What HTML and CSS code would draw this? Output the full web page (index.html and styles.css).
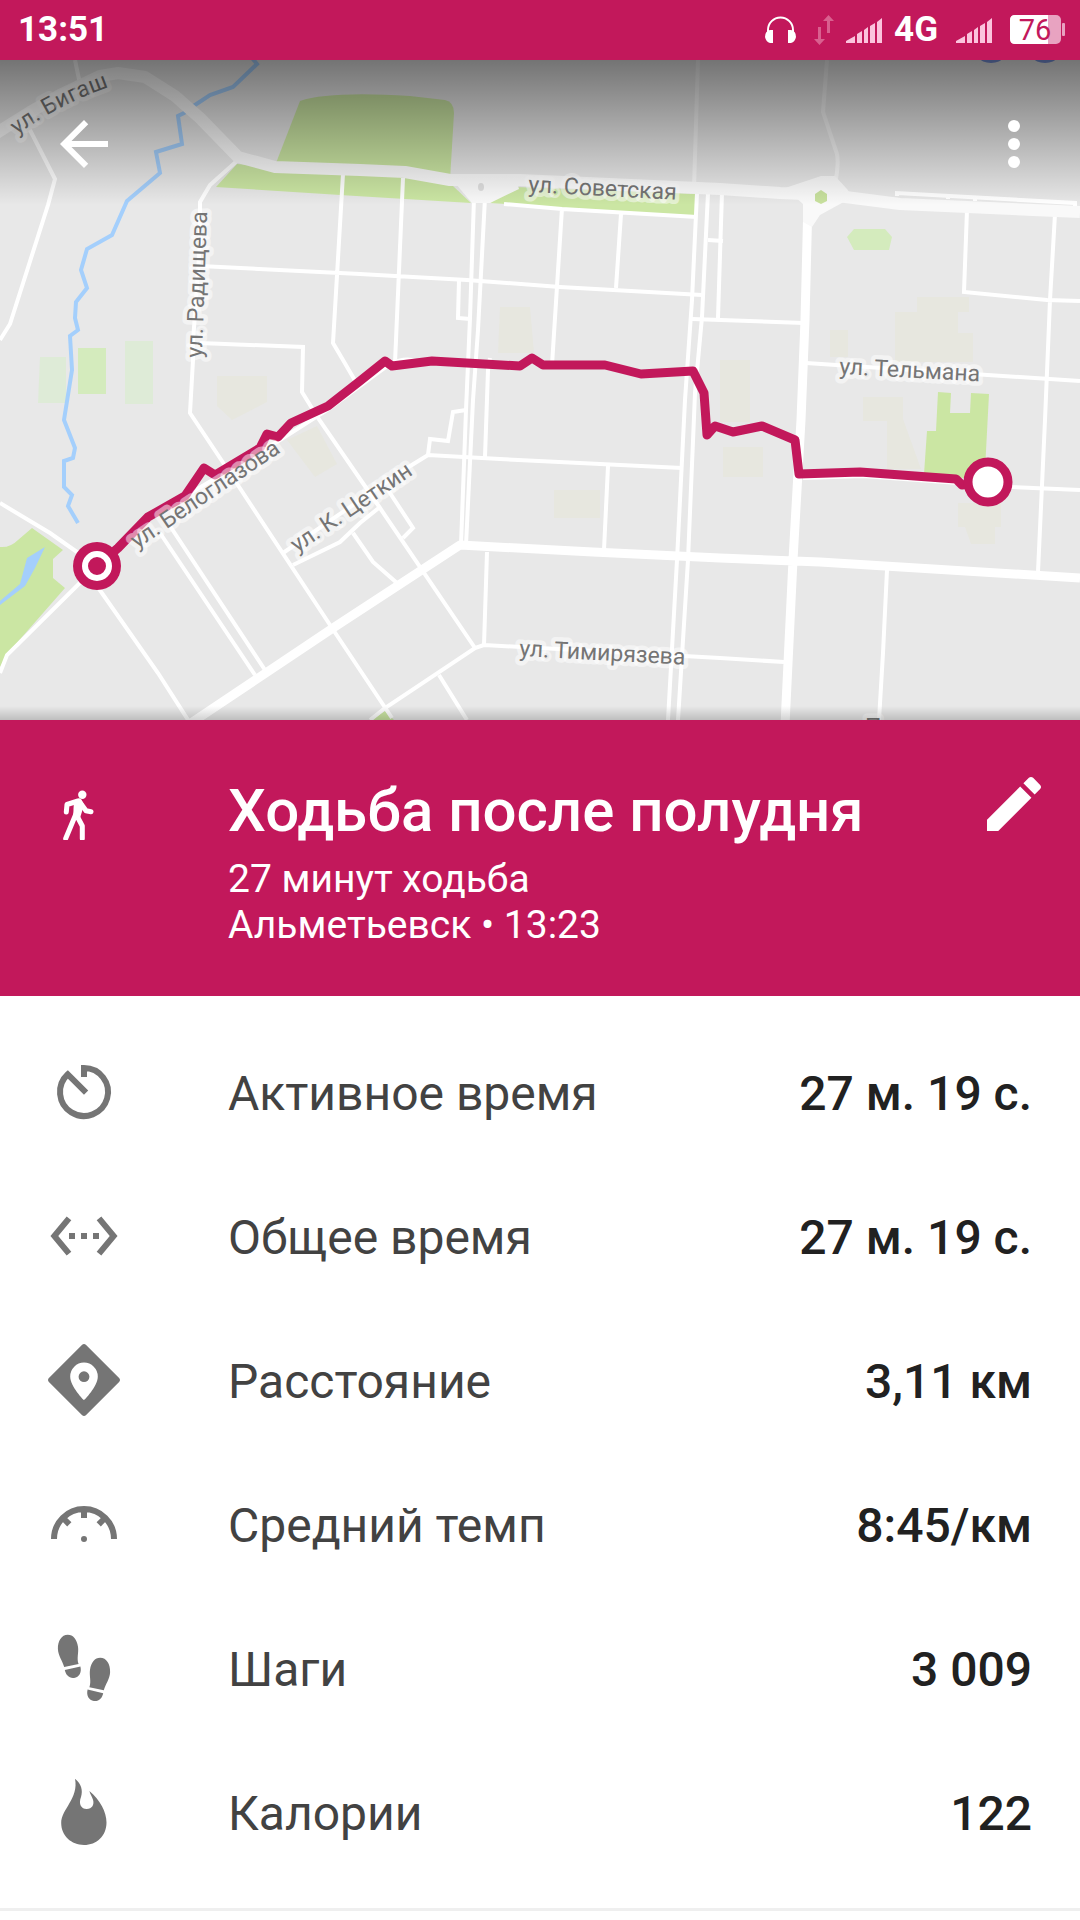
FILE: index.html
```
<!DOCTYPE html>
<html lang="ru">
<head>
    <meta charset="UTF-8">
    <meta name="viewport" content="width=device-width, initial-scale=1.0">
    <title>Ходьба после полудня</title>
    <link rel="stylesheet" href="styles.css">
</head>
<body>
    <div class="status-bar">
        <span class="clock">13:51</span>
        <div class="status-icons">
            <svg class="headphones" viewBox="0 0 31 28" width="31" height="28">
                <path d="M3 18v-4a12.500 12.500 0 0 1 25 0v4" fill="none" stroke="#fff" stroke-width="2"/>
                <path d="M8 14v13H5q-4-1-5-6 0-6 5-7zM23 14v13h3q4-1 5-6 0-6-5-7z" fill="#fff"/>
            </svg>
            <svg class="transfer" viewBox="0 0 20 30" width="20" height="30">
                <path d="M4 12h3v12h4l-5.500 6L0 24h4zM13 18h3V6h4l-5.500-6L9 6h4z" fill="#d9608f"/>
            </svg>
            <svg class="signal" viewBox="0 0 36 25" width="36" height="25">
                <path d="M0 25v-2l9-5v7zM11 25v-9l5-3v12zM18 25V12l4-3v16zM24 25V8l5-3v20zM31 25V4l5-4v25z" fill="#fbc4dd"/>
            </svg>
            <span class="network">4G</span>
            <svg class="signal" viewBox="0 0 36 25" width="36" height="25">
                <path d="M0 25v-2l9-5v7zM11 25v-9l5-3v12zM18 25V12l4-3v16zM24 25V8l5-3v20zM31 25V4l5-4v25z" fill="#fbc4dd"/>
            </svg>
            <svg class="battery" viewBox="0 -6 56 42" width="56" height="42">
                <rect width="51" height="29" rx="5" fill="#e8a3c1"/>
                <path d="M5 0h33v29H5q-5 0-5-5V5q0-5 5-5z" fill="#fff"/>
                <rect x="52" y="8" width="3" height="13" rx="1" fill="#e8a3c1"/>
                <text x="25" y="25" text-anchor="middle" class="battery-level">76</text>
            </svg>
        </div>
    </div>

    <div class="map">
        <svg class="map-canvas" viewBox="0 60 1080 660" preserveAspectRatio="xMidYMid slice">
            <rect y="60" width="1080" height="660" fill="#e8e8e8"/>

            <!-- built-up blocks -->
            <g fill="#e7e7df">
                <path d="M917 297h52v15h-11v21h15v29H895v-50h22zM830 330h18v27h-18zM720 360h30v62h-30zM723 447h40v30h-40zM863 397h40v22l18 50h-34v-48h-24zM958 503h43v24h-6v17h-24l-6-17h-7z"/>
                <path d="M500 307h30l4 46h-36zM554 490h46v28h-46zM217 376h50v26l-35 18-15-14zM287 440l30-14 20 38-22 13z"/>
            </g>

            <!-- parks -->
            <path d="M40 357h26v46H38zM125 341h28v63h-28z" fill="#deebd7"/>
            <path d="M78 348h28v46H78zM847 237l7-8h31l7 8-3 13h-35z" fill="#d4ebbd"/>
            <g fill="#cbe6a3">
                <path d="M276 163l24-62q30-10 110-5l35 4q9 2 9 13l-4 67z"/>
                <path d="M216 187l21-23 123 10 45 3 48 9 18 17-115-7zM490 203l26-16 181 7-1 22z"/>
                <path d="M938 392l13 1-1 20h20l1-20 18 1-4 76-12 9-49-5 3-43h9z"/>
                <path d="M0 547q10 1 18-7l14-12 31 22-10 9v19l12 10L8 653l-8 14zM370 721l15-10 10 10z"/>
            </g>

            <!-- water -->
            <path d="M0 601l20-17 7-26 18-11-10 21-10 18-25 19z" fill="#a4cffc"/>
            <path class="river" d="M252 58l5 6-24 23-23 8-18 12-8 6-6 3 4 28-26 8 4 21-33 28-15 34-25 14-6 21 6 18-11 14-1 16 3 12-8 6 2 34-8 50 11 28-2 10-9 3v26l8 8-4 11 10 17"/>

            <!-- side streets -->
            <g class="street">
                <path d="M75 60l5 24M30 130l25 49-7 26-38 119-10 16"/>
                <path d="M238 160l-28 25-10 17v40l-7 100v18l-3 53 32 48 110 167 60 90"/>
                <path d="M200 266l160 8 35 2 72 4 93 7 142 8M403 178l-8 185M343 174l-10 169 10 17 14 24"/>
                <path d="M200 343l103 4-1 45 16 26 62 90 95 140M388 490l25 38-10 10"/>
                <path d="M283 553l124-85 21-13 72 4 182 9M293 565l47-23 20-19 20-16M353 533l20 29 24 21"/>
                <path d="M428 455l2-16 18 2 5-29 13-2M459 280l-1 38 12 1"/>
                <path d="M474 198l-4 120-4 92-5 135M485 198l-7 132-5 70-7 145M490 358l-2 12-3 87"/>
                <path d="M562 208l-10 157M621 214l-5 74M504 204l58 5 135 8"/>
                <path d="M697 193l-5 107-7 100-8 160-9 160M708 193l-6 124-7 76-7 167-10 160"/>
                <path d="M708 240l15 1M722 192l-4 126M692 319l112 4"/>
                <path d="M608 466l-4 84M487 552l-3 93-9 3-90 60-15 12M484 645l236 13 64 4M439 675l28 45"/>
                <path d="M887 570l-4 83-4 67M967 210l-3 82 83 8 33 1M1055 214l-5 86-5 120-7 152"/>
                <path d="M806 363l274 18M803 478l60-2 150 11 67 3"/>
                <path d="M897 196v-3l178 10v4M948 199v-3M975 201v-3"/>
                <path d="M0 503l50 30 47 33-90 89-7 18M97 586l61 87 32 50M160 533l95 142M170 526l95 144"/>
                <path d="M97 566l53-49 130-77 50-32 60-44q15-7 26-3"/>
            </g>
            <path class="street faint" d="M698 60l-4 128M827 60l-4 52 14 42q2 10-2 30"/>

            <!-- main roads -->
            <path class="road" d="M-5 134l35-22 30-17 40-19 18-3 27 4 30 19 25 22 38 39 37 10 85 3 45 2 45 8h70l200 9 60 4 50 2 70 9 180 8"/>
            <path class="road main" d="M808 200l-3 120-4 100-8 140-8 165M185 727l148-99 127-83 133 7 127 6 100 4 260 16"/>
            <path d="M450 177l25-3 40 2 4 13-29 14h-18zM785 188l36-12h14l12 13 6 8-13 7-20 11-8 12-9-5v-18z" fill="#f9f9f9"/>
            <ellipse cx="481" cy="187" rx="3" ry="4" fill="#dedede"/>
            <path d="M821 190l6 4v7l-6 3-6-3v-7z" fill="#c8e19e"/>

            <ellipse cx="991" cy="58" rx="11" ry="5" fill="#7a94dc"/>
            <ellipse cx="1045" cy="58" rx="11" ry="5" fill="#7a94dc"/>

            <path class="route" d="M97 566L118 548L148 517L185 496L204 468L215 475L260 448L267 434L278 437L291 423L328 406L360 381L385 361L392 366L432 361L520 366L532 358L543 365L605 365L641 374L693 371L704 393L707 435L715 426L733 432L762 426L795 440L799 474L860 472L956 479L962 485L988 482"/>

            <path id="bigash" d="M17 135q38-28 86-46" fill="none"/>
            <g class="street-name">
                <text><textPath href="#bigash">ул. Бигаш</textPath></text>
                <text transform="translate(202 358) rotate(-88)">ул. Радищева</text>
                <text transform="translate(528 192) rotate(3)">ул. Советская</text>
                <text transform="translate(839 374) rotate(3)">ул. Тельмана</text>
                <text transform="translate(137 549) rotate(-34)">ул. Белоглазова</text>
                <text transform="translate(297 553) rotate(-34)">ул. К. Цеткин</text>
                <text transform="translate(519 656) rotate(3)">ул. Тимирязева</text>
                <text x="865" y="735">П</text>
            </g>

            <circle cx="97" cy="566" r="24" fill="#c2185b"/>
            <circle cx="97" cy="566" r="12" fill="#c2185b" stroke="#fff" stroke-width="6"/>
            <circle cx="988" cy="482" r="20" fill="#fff" stroke="#c2185b" stroke-width="9"/>
        </svg>
        <div class="toolbar">
            <button type="button" class="icon-button" aria-label="Назад">
                <svg class="icon" viewBox="0 0 24 24"><path d="M20 11H7.830l5.590-5.590L12 4l-8 8 8 8 1.410-1.410L7.830 13H20v-2z"/></svg>
            </button>
            <button type="button" class="icon-button" aria-label="Ещё">
                <svg class="icon" viewBox="0 0 24 24"><circle cx="12" cy="6" r="2"/><circle cx="12" cy="12" r="2"/><circle cx="12" cy="18" r="2"/></svg>
            </button>
        </div>
    </div>

    <div class="summary">
        <svg class="icon" viewBox="-12 -21 72 72">
            <circle cx="22.300" cy="5.700" r="4.200"/>
            <path d="M18 12l-11 3.500-.7 7.500M19 12l7 9.700 5 1M15.500 26L5.700 49.500M16 25l6.300 12v12.500" fill="none" stroke="#fff" stroke-width="5" stroke-linecap="round" stroke-linejoin="round"/>
            <path d="M14 12l7-2 3 6-4 13-7 0z"/>
        </svg>
        <div class="summary-text">
            <h1>Ходьба после полудня</h1>
            <p>27 минут ходьба</p>
            <p>Альметьевск • 13:23</p>
        </div>
        <button type="button" class="icon-button" aria-label="Изменить">
            <svg class="icon" viewBox="0 0 24 24"><path d="M3 17.250V21h3.750L17.810 9.940l-3.750-3.750L3 17.250zM20.710 7.040c.39-.39.39-1.020 0-1.410l-2.340-2.340c-.39-.39-1.020-.39-1.410 0l-1.830 1.830 3.750 3.750 1.830-1.830z"/></svg>
        </button>
    </div>

    <ul class="stats">
        <li>
            <svg class="icon" viewBox="0 0 24 24"><path d="M12 7V4a8 8 0 1 1-5.400 2.100l6.100 6.100" fill="none" stroke="#757575" stroke-width="2"/></svg>
            <span class="label">Активное время</span>
            <span class="value">27 м. 19 с.</span>
        </li>
        <li>
            <svg class="icon" viewBox="0 0 24 24"><path d="M7.770 6.760L6.230 5.480.82 12l5.410 6.520 1.540-1.280L3.420 12l4.350-5.240zM7 13h2v-2H7v2zm10-2h-2v2h2v-2zm-6 2h2v-2h-2v2zm6.770-7.520l-1.540 1.280L20.580 12l-4.350 5.240 1.540 1.280L23.180 12l-5.410-6.520z"/></svg>
            <span class="label">Общее время</span>
            <span class="value">27 м. 19 с.</span>
        </li>
        <li>
            <svg class="icon" viewBox="0 0 24 24">
                <path d="M11.300.3q.7-.6 1.400 0l11 11q.6.700 0 1.400l-11 11q-.7.600-1.400 0l-11-11q-.6-.7 0-1.400z"/>
                <path d="M12 6.200a4.600 4.600 0 0 0-4.600 4.600c0 3.400 4.600 7.900 4.600 7.900s4.600-4.500 4.600-7.900A4.600 4.600 0 0 0 12 6.200z" fill="#fff"/>
                <circle cx="12" cy="10.900" r="1.800"/>
            </svg>
            <span class="label">Расстояние</span>
            <span class="value">3,11 км</span>
        </li>
        <li>
            <svg class="icon" viewBox="0 0 24 24">
                <path d="M2 17a10 10 0 0 1 20 0M12 7v3M5 10l2.100 2.100M19 10l-2.100 2.100" fill="none" stroke="#757575" stroke-width="2"/>
                <circle cx="12" cy="17" r="1"/>
            </svg>
            <span class="label">Средний темп</span>
            <span class="value">8:45/км</span>
        </li>
        <li>
            <svg class="icon" viewBox="0 0 24 24">
                <g id="foot">
                    <path d="M6.600.9C4.500.9 3.200 3 3.300 5.700c.1 2.300 1.500 3.900 2.100 6l4.800-1c-.7-2 .1-3.700-.2-5.800C9.600 2.400 8.400.9 6.600.9z"/>
                    <path d="M5.600 12.700l5.200-1.200c.5 2-.4 3.600-2.100 3.800-1.700.2-2.800-1-3.100-2.600z"/>
                </g>
                <use href="#foot" transform="matrix(-1 0 0 1 24 7.700)"/>
            </svg>
            <span class="label">Шаги</span>
            <span class="value">3 009</span>
        </li>
        <li>
            <svg class="icon" viewBox="0 0 24 24"><path d="M9 .9c2.100 1.600 2.700 3.900 2 6.100-.9 2.400.1 4 1.900 4 1.800 0 2.600-1.500 2.100-3.100-.3-1-1-1.900-1.200-2.900 3.600 3 5.700 7 5.700 10.500 0 4.500-3.300 7.500-7.500 7.500s-7.600-3-7.600-7.300C4.400 11 10.300 7.500 9 .9z"/></svg>
            <span class="label">Калории</span>
            <span class="value">122</span>
        </li>
    </ul>
</body>
</html>
```
FILE: styles.css
```
* {
    box-sizing: border-box;
}
body {
    margin: 0;
    font-family: Roboto, sans-serif;
    background-color: #fff;
    color: #424242;
}
.status-bar {
    display: flex;
    align-items: center;
    justify-content: space-between;
    height: 60px;
    padding: 0 14px 0 18px;
    background-color: #c2185b;
    color: #fff;
}
.clock,
.network {
    font-size: 35px;
    line-height: 42px;
    font-weight: bold;
}
.status-icons {
    display: flex;
    align-items: center;
    gap: 18px;
}
.transfer {
    margin-right: -6px;
}
.network {
    margin: 0 0 0 -6px;
}
.battery-level {
    font-size: 29px;
    fill: #c2185b;
}
.map {
    position: relative;
    height: 660px;
    overflow: hidden;
}
.map-canvas {
    display: block;
    width: 100%;
    height: 100%;
}
/* dark fade under the toolbar, thin shadow above the summary */
.map::after {
    content: "";
    position: absolute;
    inset: 0;
    background: linear-gradient(rgba(0, 0, 0, 0.5), transparent 145px),
        linear-gradient(to top, rgba(0, 0, 0, 0.18), transparent 14px);
}
.street {
    fill: none;
    stroke: #fff;
    stroke-width: 4;
}
.faint {
    stroke: #f4f4f4;
}
.road {
    fill: none;
    stroke: #f9f9f9;
    stroke-width: 12;
    stroke-linejoin: round;
}
.main {
    stroke: #fff;
    stroke-width: 9;
}
.river {
    fill: none;
    stroke: #a4cffc;
    stroke-width: 4;
}
.route {
    fill: none;
    stroke: #c2185b;
    stroke-width: 9;
    stroke-linejoin: round;
}
.street-name {
    font-size: 23px;
    fill: #757575;
    stroke: rgba(255, 255, 255, 0.5);
    stroke-width: 9;
    stroke-linejoin: round;
    paint-order: stroke;
}
.toolbar {
    position: absolute;
    z-index: 1;
    top: 0;
    left: 0;
    right: 0;
    display: flex;
    justify-content: space-between;
    padding: 48px 30px 0 48px;
}
.icon-button {
    padding: 0;
    border: none;
    background: none;
    cursor: pointer;
}
.icon {
    display: block;
    flex: none;
    width: 72px;
    height: 72px;
    fill: #757575;
}
.toolbar .icon,
.summary .icon {
    fill: #fff;
}
.summary {
    display: flex;
    align-items: flex-start;
    padding: 48px 30px 48px 48px;
    background-color: #c2185b;
    color: #fff;
}
.summary-text {
    flex: 1;
    padding: 8px 0 0 108px;
}
.summary h1 {
    margin: 0 0 10px;
    font-size: 60px;
    line-height: 70px;
    font-weight: 500;
}
.summary p {
    margin: 0;
    font-size: 39px;
    line-height: 46px;
}
.stats {
    list-style: none;
    margin: 0;
    padding: 24px 0;
    border-bottom: 3px solid #efefef;
}
.stats li {
    display: flex;
    align-items: center;
    height: 144px;
    padding: 0 48px;
    font-size: 48px;
    line-height: 56px;
}
.label,
.value {
    padding-top: 4px;
}
.label {
    flex: 1;
    padding-left: 108px;
}
.value {
    color: #212121;
    font-weight: 500;
}
```
